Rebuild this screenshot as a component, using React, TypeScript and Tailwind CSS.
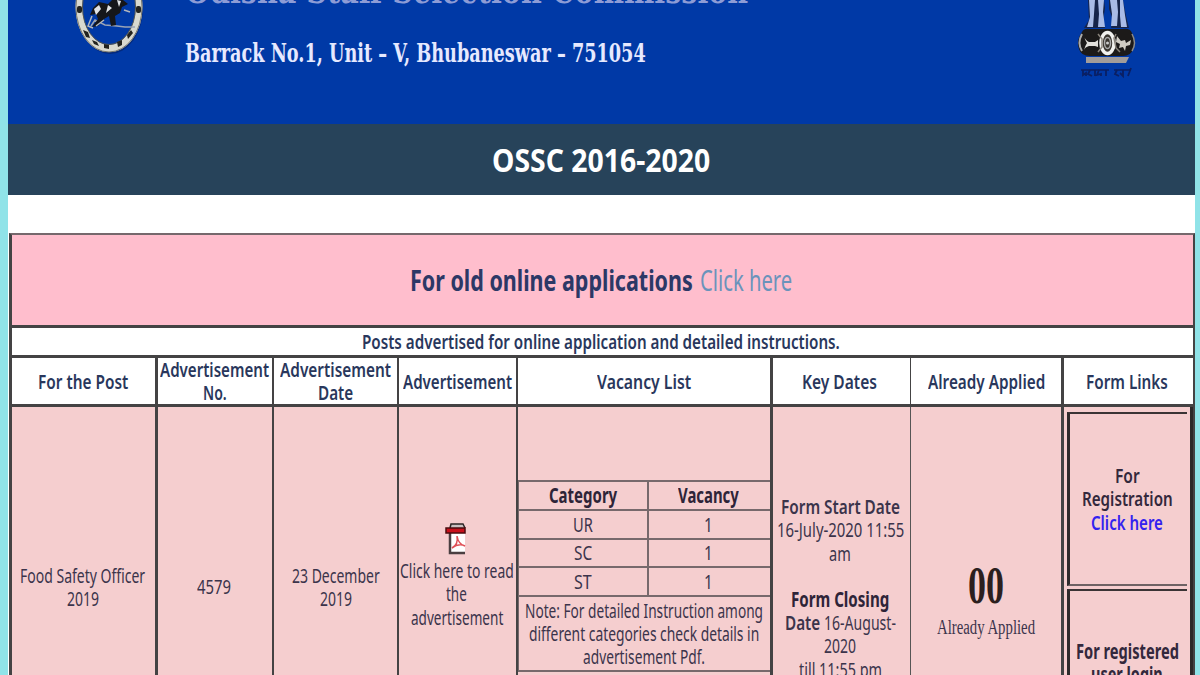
import { useLayoutEffect, useRef, useState } from "react";

interface LineProps {
  text: string;
  width: number;
  className?: string;
}

// One line of text, condensed or stretched to a given width
const Line = ({ text, width, className = "" }: LineProps) => {
  const ref = useRef<HTMLSpanElement>(null);
  const [scale, setScale] = useState(1);

  useLayoutEffect(() => {
    if (ref.current) setScale(width / ref.current.offsetWidth);
  }, [width, text]);

  return (
    <span className={`block shrink-0 text-left ${className}`} style={{ width }}>
      <span
        ref={ref}
        className="inline-block origin-left whitespace-nowrap align-top"
        style={{ transform: `scaleX(${scale})` }}
      >
        {text}
      </span>
    </span>
  );
};

const headings: { lines: [string, number][]; border: string }[] = [
  { lines: [["For the Post", 90]], border: "border-r-3 pr-[2px]" },
  { lines: [["Advertisement", 109], ["No.", 24]], border: "border-r-2 pr-px" },
  { lines: [["Advertisement", 111], ["Date", 35]], border: "border-r-2" },
  { lines: [["Advertisement", 109]], border: "border-r-2" },
  { lines: [["Vacancy List", 94]], border: "border-r-3 pr-px" },
  { lines: [["Key Dates", 75]], border: "border-r pr-1" },
  { lines: [["Already Applied", 117]], border: "border-r-3" },
  { lines: [["Form Links", 82]], border: "border-r-0 pr-[3px]" },
];

const vacancies = [
  { category: "UR", width: 20, count: "1" },
  { category: "SC", width: 18, count: "1" },
  { category: "ST", width: 18, count: "1" },
];

const columns =
  "grid grid-cols-[146px_116px_125px_119px_255px_138px_153px_129px]";

const StateSeal = () => (
  <svg width="72" height="58" viewBox="0 0 72 58" className="shrink-0">
    <ellipse cx="36" cy="8" rx="33" ry="46" fill="#06236b" opacity="0.7" />
    <ellipse cx="35" cy="7" rx="30" ry="41.5" fill="#0039a6" stroke="#d9d9cf" strokeWidth="7" />
    <ellipse cx="35" cy="7" rx="33" ry="45" fill="none" stroke="#77776f" strokeWidth="1" />
    <ellipse cx="35" cy="7" rx="26.5" ry="37.5" fill="none" stroke="#55564f" strokeWidth="1" />
    <g fill="#23231f">
      <rect x="3" y="6" width="5" height="7" rx="2" />
      <rect x="62" y="6" width="5" height="7" rx="2" />
      <path d="M9 30l5 2 2 6-4-1zM18 40l5 2 2 4-5-2zM30 44l5 1v4l-5-1zM43 42l5-2v5l-4 2zM53 35l4-5 2 3-5 6z" />
    </g>
    <path d="M17 26l4-6 10 5 12 1 8 1h10" fill="none" stroke="#9aa4b5" strokeWidth="1.500" />
    <path d="M19 8l6-6 9 2 4-4h11l5 4-6 3-2 6-5 3 1 9-5 1-2-10-5 3-6 7-6 1 6-8-2-5-6 1z" fill="#15161a" />
    <path d="M20 9l5-4 2 4-5 6zM34 5l4 3-6 5zM43 0l4 1-2 6z" fill="#dfe2e5" />
    <path d="M18 16l-4 10 5 2M50 10l6 2M30 20l-8 6" fill="none" stroke="#b1b6bd" strokeWidth="1.5" />
  </svg>
);

const AshokaEmblem = () => (
  <svg width="64" height="80" viewBox="0 0 64 80" className="shrink-0">
    <path d="M13 0h16l1 8-2 13 2 7H9l5-8zM34 0h14l3 16 3 12H36l2-8-4-11z" fill="#16244a" />
    <path d="M14 0h6l-1 14-1 13h-6l3-10zM23 0h6l-1 12 2 15h-7l1-13zM35 0h7l1 12-1 14h-6l1-12zM45 0h3l2 15 2 12h-6l-1-11z" fill="#a9bbe6" />
    <path d="M7 32q2-4 8-3h33q7-1 9 4 5 8 1 16-2 7-10 7H15q-9 0-11-7-3-9 3-17z" fill="#1c1a19" />
    <path d="M7 34q-5 9 0 17" fill="none" stroke="#aaa" strokeWidth="2" />
    <path d="M57 34q5 9 0 17" fill="none" stroke="#8b8b8b" strokeWidth="1.5" />
    <ellipse cx="32.500" cy="43" rx="6.500" ry="10.500" fill="#38342f" stroke="#f1f1ee" strokeWidth="3.500" />
    <ellipse cx="32.500" cy="43" rx="3" ry="5.500" fill="none" stroke="#aaa" strokeWidth="1.500" />
    <circle cx="32.500" cy="43" r="1.500" fill="#ccc" />
    <path d="M9 36q1 4 5 6h6l3-2v7l-3-1h-6q-4 1-5 4 1-4 3-7-2-3-3-7z" fill="#e3e1dc" />
    <path d="M42 36l4 5 4-1 1 3 5-3-1 5-4 1-1 5-2-4-4 1 1-4-4-2z" fill="#d0ccc4" />
    <path d="M23 34l4 5v8l-4 5M41 34l-2 4 2 10 4 4" fill="none" stroke="#8a847c" strokeWidth="1.500" />
    <path d="M11 57h43l-3 6H11z" fill="#a29c99" />
    <path d="M6 70h28M39 70h17" stroke="#0a1f63" strokeWidth="1.500" />
    <path d="M8 70v5l3-2v3M15 70l-2 4 4 2M20 70v6M24 70l-2 5 4-1v2M31 70v6M42 70l-2 4 4 2M48 70v6l-3-3M53 76l3-8" fill="none" stroke="#0a1f63" strokeWidth="1.800" />
  </svg>
);

const PdfIcon = () => (
  <svg width="22" height="32" viewBox="0 0 22 32" className="block">
    <path d="M5 1h14l1 5v25H5z" fill="#fff" />
    <path d="M5 5l1-4h12l2 4" fill="#c9c0c0" stroke="#2b2525" strokeWidth="1.500" />
    <path d="M5 10v20h15" fill="none" stroke="#4a3f41" strokeWidth="2.500" />
    <path d="M1 5h19v5H1z" fill="#c8101b" stroke="#4b0c10" strokeWidth="1.500" />
    <path d="M12 13c1 6 4 9 8 10-4-2-9-1-13 2 4-2 6-6 5-12z" fill="none" stroke="#e05158" strokeWidth="1.500" />
  </svg>
);

const App = () => {
  return (
    <div className="h-[675px] w-[1200px] overflow-hidden bg-[#90e3e8] pl-2 pr-[5px] font-['Noto_Sans','Open_Sans',sans-serif] text-[20.500px] leading-[23.300px] text-[#3b344b]">
      <div className="h-[900px] bg-white">
        {/* Banner */}
        <header className="flex h-[124px] items-start bg-[#0039a6] pl-[66px] pr-[56px] font-['DejaVu_Serif','Liberation_Serif',serif] font-bold">
          <StateSeal />
          <div className="ml-[39px] -mt-[29px] flex-1">
            <Line
              text="Odisha Staff Selection Commission"
              width={563}
              className="text-[35px] leading-[40px] text-[#8d9cd6]"
            />
            <Line
              text="Barrack No.1, Unit – V, Bhubaneswar – 751054"
              width={461}
              className="mt-[26px] text-[25.500px] leading-[32px] text-[#e6e9ff]"
            />
          </div>
          <AshokaEmblem />
        </header>

        <div className="flex h-[71px] items-center justify-center bg-[#27435a] pr-px pt-px font-bold text-white">
          <Line text="OSSC 2016-2020" width={218} className="text-[32px] leading-[36px]" />
        </div>

        {/* Posts table */}
        <div className="ml-px mt-[38px] h-[700px] border-l-3 border-r-2 border-t-2 border-[#444344] border-t-[#75686c]">
          <div className="flex h-[90px] items-center justify-center gap-[7px] bg-[#ffbecd] pr-1 text-[29px] leading-[32px]">
            <Line text="For old online applications" width={283} className="font-bold text-[#2c3866]" />
            <Line text="Click here" width={92} className="text-[#6a93bb]" />
          </div>
          <div className="flex h-[33px] items-center justify-center border-y-3 border-[#444344] pr-1 pt-px font-semibold text-[#29375c]">
            <Line
              text="Posts advertised for online application and detailed instructions."
              width={478}
            />
          </div>

          <div className={`${columns} h-[49px] border-b-3 border-[#444344] font-semibold text-[#29375c]`}>
            {headings.map((heading, idx) => (
              <div
                key={idx}
                className={`flex flex-col items-center justify-center border-[#444344] pb-px ${heading.border}`}
              >
                {heading.lines.map(([text, width]) => (
                  <Line key={text} text={text} width={width} />
                ))}
              </div>
            ))}
          </div>

          <div className={`${columns} h-[540px] bg-[#f5cecf]`}>
            <div className="flex flex-col items-center border-r-3 border-[#444344] pr-[2px] pt-[157px]">
              <Line text="Food Safety Officer" width={125} />
              <Line text="2019" width={32} />
            </div>

            <div className="flex flex-col items-center border-r-2 border-[#444344] pr-[2px] pt-[168px]">
              <Line text="4579" width={34} />
            </div>

            <div className="flex flex-col items-center border-r-2 border-[#444344] pt-[157px]">
              <Line text="23 December" width={88} />
              <Line text="2019" width={32} />
            </div>

            <div className="flex flex-col items-center border-r-2 border-[#444344] pr-[2px] pt-[116px]">
              <div className="pr-[2px]">
                <PdfIcon />
              </div>
              <div className="mt-1 flex flex-col items-center">
                <Line text="Click here to read" width={114} />
                <Line text="the" width={21} />
                <Line text="advertisement" width={92} />
              </div>
            </div>

            {/* Vacancy list */}
            <div className="border-r-3 border-[#444344] pt-[73px]">
              <div className="border-b-2 border-l border-t-2 border-[#77696c]">
                <div className="grid h-[27px] grid-cols-[130px_1fr] font-bold text-[#2e2438]">
                  <div className="flex items-center justify-center border-r-2 border-[#77696c]">
                    <Line text="Category" width={68} />
                  </div>
                  <div className="flex items-center justify-center pr-[3px]">
                    <Line text="Vacancy" width={61} />
                  </div>
                </div>
                {vacancies.map((row) => (
                  <div
                    key={row.category}
                    className="grid h-[28.500px] grid-cols-[130px_1fr] border-t-2 border-[#77696c]"
                  >
                    <div className="flex items-center justify-center border-r-2 border-[#77696c]">
                      <Line text={row.category} width={row.width} />
                    </div>
                    <div className="flex items-center justify-center pr-[3px]">
                      <Line text={row.count} width={9} />
                    </div>
                  </div>
                ))}
                <div className="flex h-[75px] flex-col items-center border-t-2 border-[#77696c] pr-[2px] pt-[2px]">
                  <Line text="Note: For detailed Instruction among" width={238} />
                  <Line text="different categories check details in" width={230} />
                  <Line text="advertisement Pdf." width={122} />
                </div>
              </div>
            </div>

            <div className="flex flex-col items-center border-r border-[#555] pr-[3px] pt-[88px]">
              <Line text="Form Start Date" width={119} className="font-semibold" />
              <Line text="16-July-2020 11:55" width={127} />
              <Line text="am" width={22} />
              <div className="mt-[23px] flex flex-col items-center">
                <Line text="Form Closing" width={98} className="font-bold text-[#2e2438]" />
                <div className="flex gap-1">
                  <Line text="Date" width={35} className="font-semibold" />
                  <Line text="16-August-" width={72} />
                </div>
                <Line text="2020" width={32} />
                <Line text="till 11:55 pm" width={83} />
              </div>
            </div>

            <div className="flex flex-col items-center border-r-3 border-[#444344] pt-[153px] font-['Liberation_Serif',serif]">
              <Line text="00" width={36} className="text-[52px] leading-[52px] font-bold text-[#2c1f1e]" />
              <Line text="Already Applied" width={98} className="mt-[4px]" />
            </div>

            {/* Form links */}
            <div className="border-r-3 border-[#2c2829] pl-[3px] pr-[3px] pt-[5px] font-semibold text-[#33283c]">
              <div className="flex h-[174px] flex-col items-center border-b-2 border-l-3 border-t-2 border-b-[#6e6264] border-l-[#2f2a2b] border-t-[#3a3435] pr-[3px] pt-[50px]">
                <Line text="For" width={25} />
                <Line text="Registration" width={91} />
                <Line text="Click here" width={72} className="text-[#3322f0]" />
              </div>
              <div className="mt-[3px] flex h-[174px] flex-col items-center border-l-3 border-t-2 border-l-[#2f2a2b] border-t-[#3a3435] pr-[3px] pt-[49px] font-bold">
                <Line text="For registered" width={103} />
                <Line text="user login" width={72} />
              </div>
            </div>
          </div>
        </div>
      </div>
    </div>
  );
};

export default App;
